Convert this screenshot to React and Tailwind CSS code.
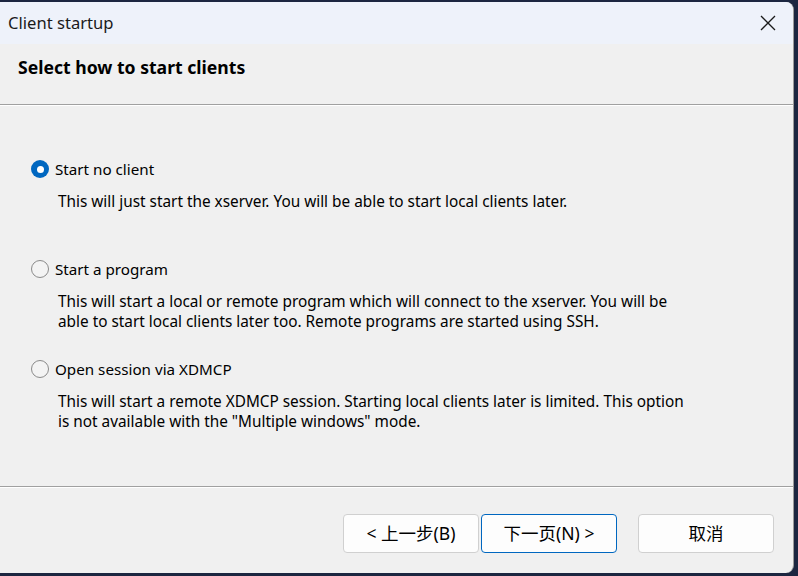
export default function App() {
  const options = [
    {
      label: "Start no client",
      desc: ["This will just start the xserver. You will be able to start local clients later."],
      checked: true,
    },
    {
      label: "Start a program",
      desc: [
        "This will start a local or remote program which will connect to the xserver. You will be",
        "able to start local clients later too. Remote programs are started using SSH.",
      ],
    },
    {
      label: "Open session via XDMCP",
      desc: [
        "This will start a remote XDMCP session. Starting local clients later is limited. This option",
        "is not available with the \"Multiple windows\" mode.",
      ],
    },
  ];

  return (
    <div
      className="w-[798px] h-[576px] bg-[#1c2640] overflow-hidden pt-[2px]"
      style={{ fontFamily: '"Noto Sans", "Noto Sans CJK SC", sans-serif' }}
    >
      {/* Dialog window */}
      <div className="w-[794px] h-[571px] bg-[#f0f0f0] rounded-r-[8px] border-r border-[#9a9a9a] flex flex-col overflow-hidden">

        {/* Title bar */}
        <div className="h-[42px] bg-[#eef2fa] flex items-center justify-between pl-[8px] pr-[16px] shrink-0">
          <span className="text-[16.6px] text-[#1a1a1a]">Client startup</span>
          <svg width="18" height="18" viewBox="0 0 18 18" fill="none">
            <path d="M2 2L16 16M16 2L2 16" stroke="#1a1a1a" strokeWidth="1.3" />
          </svg>
        </div>

        {/* Header */}
        <div className="h-[60px] flex items-center pl-[18px] shrink-0">
          <h1 className="text-[17.6px] font-bold text-black pb-[14px]">Select how to start clients</h1>
        </div>
        <div className="h-px bg-[#a0a0a0] shrink-0" />
        <div className="h-px bg-white shrink-0" />

        {/* Options */}
        <div className="flex-1 pt-[53px] pl-[31px]">
          {options.map((o) => (
            <div key={o.label} className="h-[100px]">
              <div className="flex items-center h-[20px] gap-[6px]">
                {o.checked ? (
                  <span className="w-[18px] h-[18px] rounded-full bg-[#0067c0] flex items-center justify-center">
                    <span className="w-[7px] h-[7px] rounded-full bg-white" />
                  </span>
                ) : (
                  <span className="w-[18px] h-[18px] rounded-full border border-[#8a8a8a] bg-[#f3f3f3]" />
                )}
                <span className="text-[15.2px] text-black">{o.label}</span>
              </div>
              <div className="mt-[12px] pl-[27px] text-[15.35px] leading-[20px] text-black">
                {o.desc.map((d) => (
                  <div key={d}>{d}</div>
                ))}
              </div>
            </div>
          ))}
        </div>

        <div className="h-px bg-[#a0a0a0] shrink-0" />
        <div className="h-px bg-white shrink-0" />

        {/* Footer buttons */}
        <div className="h-[85px] shrink-0 flex items-start pt-[26px] pl-[343px]">
          <button className="w-[136px] h-[39px] bg-[#fdfdfd] border border-[#d0d0d0] rounded-[4px] text-[17.5px] text-black">
            &lt; 上一步(B)
          </button>
          <button className="ml-[2px] w-[136px] h-[39px] bg-[#fdfdfd] border border-[#0067c0] rounded-[4px] text-[17.5px] text-black">
            下一页(N) &gt;
          </button>
          <button className="ml-[21px] w-[136px] h-[39px] bg-[#fdfdfd] border border-[#d0d0d0] rounded-[4px] text-[17.5px] text-black">
            取消
          </button>
        </div>
      </div>
    </div>
  );
}
